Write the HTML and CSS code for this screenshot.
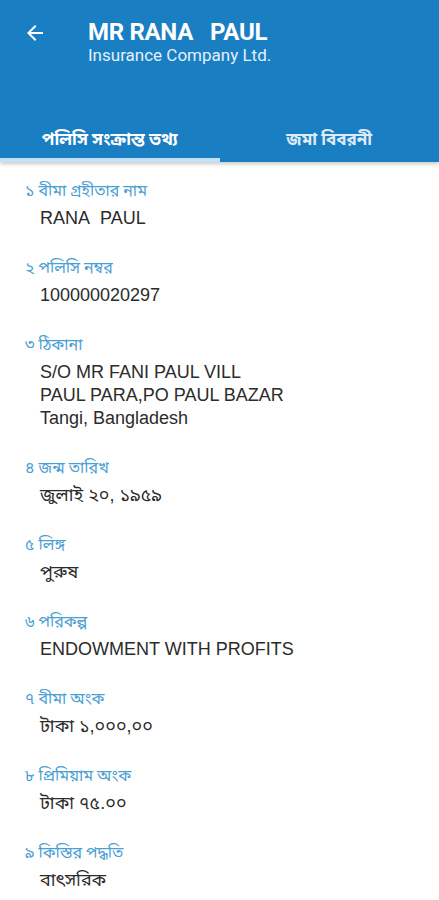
FILE: index.html
```html
<!DOCTYPE html>
<html lang="bn">
<head>
<meta charset="utf-8">
<link rel="stylesheet" href="styles.css">
</head>
<body>
<header class="appbar">
  <div class="toolbar">
    <svg class="back" width="24" height="24" viewBox="0 0 24 24"><path d="M20 11H7.83l5.59-5.59L12 4l-8 8 8 8 1.41-1.41L7.83 13H20v-2z" fill="#fff"/></svg>
    <div class="titles">
      <div class="title">MR RANA&nbsp;&nbsp; PAUL</div>
      <div class="subtitle">Insurance Company Ltd.</div>
    </div>
  </div>
  <nav class="tabs">
    <div class="tab active">পলিসি সংক্রান্ত তথ্য</div>
    <div class="tab">জমা বিবরনী</div>
  </nav>
</header>
<main class="list">
  <div class="item"><div class="label">১ বীমা গ্রহীতার নাম</div><div class="value">RANA&nbsp; PAUL</div></div>
  <div class="item"><div class="label">২ পলিসি নম্বর</div><div class="value">100000020297</div></div>
  <div class="item"><div class="label">৩ ঠিকানা</div><div class="value">S/O MR FANI PAUL VILL<br>PAUL PARA,PO PAUL BAZAR<br>Tangi, Bangladesh</div></div>
  <div class="item"><div class="label">৪ জন্ম তারিখ</div><div class="value">জুলাই ২০, ১৯৫৯</div></div>
  <div class="item"><div class="label">৫ লিঙ্গ</div><div class="value">পুরুষ</div></div>
  <div class="item"><div class="label">৬ পরিকল্প</div><div class="value">ENDOWMENT WITH PROFITS</div></div>
  <div class="item"><div class="label">৭ বীমা অংক</div><div class="value">টাকা ১,০০০,০০</div></div>
  <div class="item"><div class="label">৮ প্রিমিয়াম অংক</div><div class="value">টাকা ৭৫.০০</div></div>
  <div class="item"><div class="label">৯ কিস্তির পদ্ধতি</div><div class="value">বাৎসরিক</div></div>
</main>
</body>
</html>
```
FILE: styles.css
```css
* { box-sizing: border-box; }
html, body { margin: 0; padding: 0; background: #fff; }
body {
  font-family: Roboto, "Noto Sans Bengali", sans-serif;
  width: 439px;
  overflow: hidden;
}
.appbar {
  background: #1a7ec3;
  color: #fff;
  box-shadow: 0 2px 4px rgba(0,0,0,0.22);
  position: relative;
}
.toolbar {
  display: flex;
  align-items: flex-start;
  padding: 21px 0 0 23px;
  height: 118px;
}
.back { width: 24px; height: 24px; flex: none; }
.titles { margin-left: 41px; margin-top: -3px; }
.title { font-size: 24px; font-weight: 700; line-height: 28px; letter-spacing: -0.3px; }
.subtitle { font-size: 17px; line-height: 19px; color: #e4f0fa; }
.tabs {
  display: flex;
  height: 44px;
}
.tab {
  flex: 1;
  text-align: center;
  font-size: 17px;
  font-weight: 700;
  line-height: 38px;
  padding-top: 2px;
  color: #dcebf7;
  border-bottom: 4px solid transparent;
}
.tab.active { color: #fff; border-bottom-color: #c2e1f6; }
.list { padding: 19px 0 0 25px; }
.item { margin-bottom: 28px; }
.label { font-size: 16px; line-height: 20px; color: #4ba0d3; }
.value {
  font-family: "Liberation Sans", "Noto Sans Bengali", sans-serif;
  font-size: 18px;
  line-height: 23px;
  color: #2b2b2b;
  padding-left: 15px;
  margin-top: 6px;
}
```
